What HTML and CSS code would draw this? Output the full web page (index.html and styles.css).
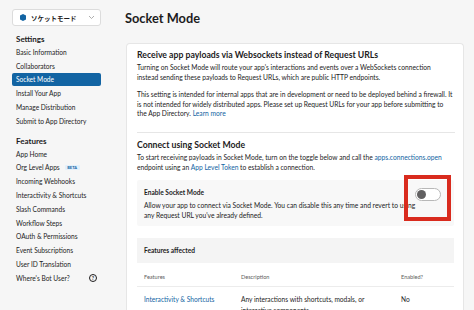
FILE: index.html
```html
<!DOCTYPE html>
<html lang="ja">
<head>
    <meta charset="UTF-8">
    <title>Socket Mode</title>
    <link rel="stylesheet" href="styles.css">
</head>
<body>
    <div class="app">
        <aside class="sidebar">
            <div class="app-select">
                <svg class="app-icon" width="6" height="7" viewBox="0 0 6 7"><path d="M0 1.5 L3 0 L6 1.5 L6 5.5 L3 7 L0 5.5 Z" fill="#1264a3"/></svg>
                <span class="app-name">ソケットモード</span>
                <svg class="chevron" width="7" height="5" viewBox="0 0 7 5"><path d="M1 1 L3.5 3.5 L6 1" fill="none" stroke="#9a9a9a" stroke-width="0.8"/></svg>
            </div>

            <div class="nav-heading">Settings</div>
            <a class="nav-item">Basic Information</a>
            <a class="nav-item">Collaborators</a>
            <a class="nav-item active">Socket Mode</a>
            <a class="nav-item">Install Your App</a>
            <a class="nav-item">Manage Distribution</a>
            <a class="nav-item">Submit to App Directory</a>

            <div class="nav-heading features-heading">Features</div>
            <a class="nav-item">App Home</a>
            <a class="nav-item">Org Level Apps <span class="beta">BETA</span></a>
            <a class="nav-item">Incoming Webhooks</a>
            <a class="nav-item">Interactivity &amp; Shortcuts</a>
            <a class="nav-item">Slash Commands</a>
            <a class="nav-item">Workflow Steps</a>
            <a class="nav-item">OAuth &amp; Permissions</a>
            <a class="nav-item">Event Subscriptions</a>
            <a class="nav-item">User ID Translation</a>
            <a class="nav-item help">Where's Bot User? <span class="help-icon">?</span></a>
        </aside>

        <main class="content">
            <h1>Socket Mode</h1>
            <section class="card">
                <h2>Receive app payloads via Websockets instead of Request URLs</h2>
                <p>Turning on Socket Mode will route your app's interactions and events over a WebSockets connection<br>
                instead sending these payloads to Request URLs, which are public HTTP endpoints.</p>
                <p>This setting is intended for internal apps that are in development or need to be deployed behind a firewall. It<br>
                is not intended for widely distributed apps. Please set up Request URLs for your app before submitting to<br>
                the App Directory. <a href="#">Learn more</a></p>

                <hr>

                <h2>Connect using Socket Mode</h2>
                <p>To start receiving payloads in Socket Mode, turn on the toggle below and call the <a href="#">apps.connections.open</a><br>
                endpoint using an <a href="#">App Level Token</a> to establish a connection.</p>

                <div class="setting">
                    <div class="setting-head">
                        <span class="setting-title">Enable Socket Mode</span>
                        <span class="toggle">
                            <span class="knob"></span>
                            <span class="highlight"></span>
                        </span>
                    </div>
                    <p>Allow your app to connect via Socket Mode. You can disable this any time and revert to using<br>
                    any Request URL you've already defined.</p>
                </div>

                <div class="features">
                    <div class="features-title">Features affected</div>
                    <table>
                        <tr>
                            <th class="col-feature">Features</th>
                            <th class="col-desc">Description</th>
                            <th>Enabled?</th>
                        </tr>
                        <tr>
                            <td><a href="#">Interactivity &amp; Shortcuts</a></td>
                            <td>Any interactions with shortcuts, modals, or interactive components</td>
                            <td>No</td>
                        </tr>
                    </table>
                </div>
            </section>
        </main>
    </div>
</body>
</html>
```

FILE: styles.css
```css
body {
    margin: 0;
    background-color: #f6f6f6;
    font-family: Lato, "Noto Sans", "Noto Sans CJK JP", sans-serif;
    color: #1d1c1d;
    overflow: hidden;
}
a {
    color: #1264a3;
    text-decoration: none;
}
.app {
    display: flex;
    height: 310px;
}

/* sidebar */
.sidebar {
    width: 110px;
    flex-shrink: 0;
    padding-top: 9px;
    display: flex;
    flex-direction: column;
}
.app-select {
    display: flex;
    align-items: center;
    height: 15px;
    margin: 0 9px 0 12px;
    padding: 0 5px 0 7px;
    background-color: #ffffff;
    border: 1px solid #dcdcdc;
    border-radius: 3px;
}
.app-name {
    margin-left: 5px;
    flex: 1;
    font-family: "Noto Sans CJK JP", sans-serif;
    font-size: 6.5px;
    font-weight: 700;
}
.nav-heading {
    height: 12px;
    line-height: 12px;
    margin: 7px 0 0 16px;
    font-size: 8px;
    font-weight: 700;
}
.features-heading {
    margin-top: 7px;
}
.nav-item {
    display: flex;
    align-items: center;
    height: 13.8px;
    margin: 0 9px 0 12px;
    padding-left: 4px;
    font-size: 6.6px;
    color: #1d1c1d;
    border-radius: 2px;
}
.nav-item.active {
    height: 13px;
    margin-top: 0.4px;
    margin-bottom: 0.4px;
    background-color: #1264a3;
    color: #ffffff;
}
.beta {
    margin-left: 5px;
    padding: 0 2.5px;
    font-size: 4px;
    font-weight: 700;
    color: #1264a3;
    background-color: #e3f0fb;
    border-radius: 1px;
}
.help-icon {
    margin-left: auto;
    margin-right: 4px;
    width: 6px;
    height: 6px;
    line-height: 6px;
    text-align: center;
    font-size: 5px;
    font-weight: 700;
    border: 1px solid #1d1c1d;
    border-radius: 50%;
}

/* content */
.content {
    flex: 1;
    padding: 0 10px 0 16px;
}
h1 {
    margin: 9px 0 0 -1px;
    font-size: 12.8px;
    line-height: 18px;
    font-weight: 700;
}
.card {
    margin-top: 16px;
    padding: 5px 8px 0 10px;
    background-color: #ffffff;
    border: 1px solid #e6e6e6;
    border-bottom: none;
    border-radius: 4px 4px 0 0;
}
h2 {
    margin: 0 0 2px;
    font-size: 8.7px;
    line-height: 12px;
    font-weight: 700;
}
p {
    margin: 0 0 7.6px;
    font-size: 6.7px;
    line-height: 9.7px;
    white-space: nowrap;
}
hr {
    margin: 13px 0 6px;
    border: none;
    border-top: 1px solid #e6e6e6;
}
.setting {
    margin-right: 1px;
    padding: 6px 7px 1px;
    background-color: #f8f8f8;
    border-radius: 2px;
}
.setting-head {
    display: flex;
    justify-content: space-between;
    align-items: center;
    height: 12px;
    margin-bottom: 3px;
}
.setting-title {
    font-size: 6.6px;
    font-weight: 700;
}
.setting p {
    margin-bottom: 4px;
}
.toggle {
    position: relative;
    display: flex;
    align-items: center;
    width: 22px;
    height: 11px;
    margin-right: 6px;
    margin-top: 5px;
    padding: 0 1px;
    background-color: #ffffff;
    border: 1px solid #b8b8b8;
    border-radius: 7px;
}
.knob {
    width: 9px;
    height: 9px;
    background-color: #616061;
    border-radius: 50%;
}
.highlight {
    position: absolute;
    left: -12px;
    top: -14px;
    width: 39px;
    height: 38px;
    border: 4px solid #d92b1e;
}
.features {
    margin: 12px 1px 0 0;
}
.features-title {
    height: 25px;
    line-height: 25px;
    padding-left: 7px;
    background-color: #f4f4f4;
    font-size: 6.6px;
    font-weight: 700;
}
table {
    width: 100%;
    border-collapse: collapse;
}
th {
    height: 19px;
    padding: 4px 7px 0;
    text-align: left;
    vertical-align: middle;
    font-size: 5.6px;
    font-weight: 400;
    color: #616061;
    border-bottom: 1px solid #ececec;
}
.col-feature {
    width: 83px;
}
.col-desc {
    width: 146px;
}
td {
    padding: 7px 7px 0;
    vertical-align: top;
    font-size: 6.6px;
    line-height: 11px;
}
```
